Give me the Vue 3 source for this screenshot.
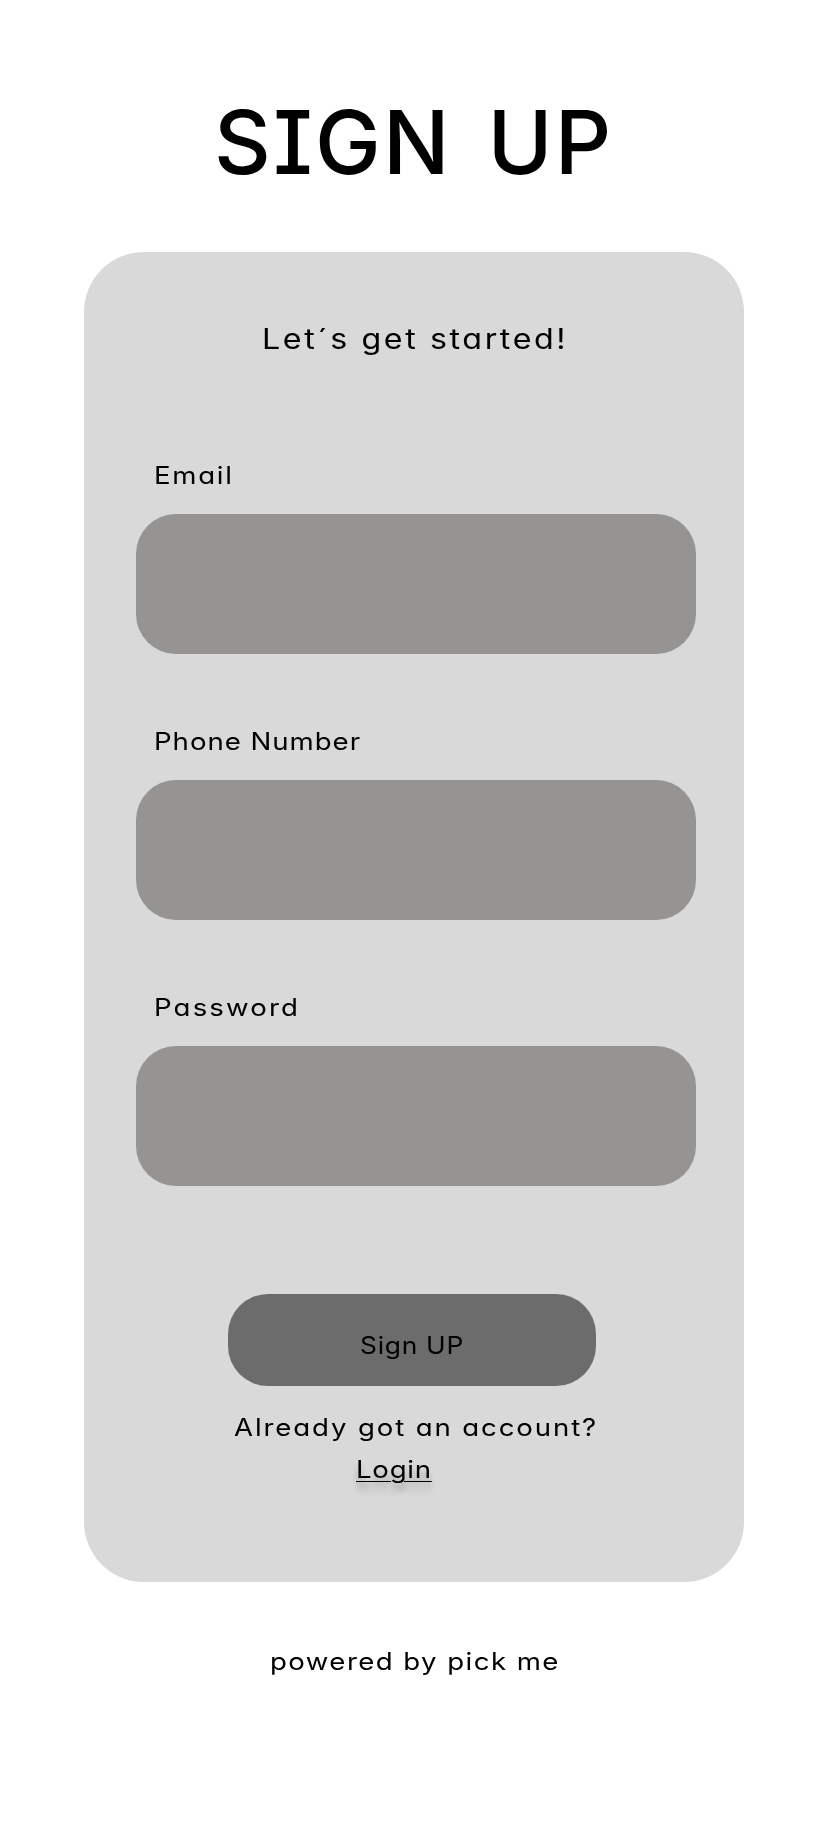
<script setup>
import { reactive } from 'vue'

const fields = [
  { id: 'email', label: 'Email', type: 'email' },
  { id: 'phone', label: 'Phone Number', type: 'tel' },
  { id: 'password', label: 'Password', type: 'password' },
]
const values = reactive({ email: '', phone: '', password: '' })
</script>

<template>
  <main class="page">
    <h1 class="title">SIGN UP</h1>
    <form class="card" @submit.prevent>
      <p class="intro wide">Let´s get started!</p>
      <div v-for="f in fields" :key="f.id" class="field">
        <label :for="f.id" class="label wide" :class="f.id">{{ f.label }}</label>
        <input :id="f.id" v-model="values[f.id]" :type="f.type" class="input" />
      </div>
      <button class="submit" type="submit"><span class="caption">Sign UP</span></button>
      <p class="already wide">Already got an account?</p>
      <a class="login wide">Login</a>
    </form>
    <p class="footer wide">powered by pick me</p>
  </main>
</template>

<style>
body {
  background: #fff;
}
</style>

<style scoped>
.page {
  box-sizing: border-box;
  width: 824px;
  height: 1834px;
  padding: 92px 80px 0 84px;
  color: #000;
  font-family: Inter, "Noto Sans", sans-serif;
  font-size: 24px;
  line-height: 30px;
  font-feature-settings: "cv11", "cv08";
  white-space: nowrap;
}
.wide {
  transform: scaleX(1.15);
  transform-origin: left center;
}
.title {
  margin: 0 0 60px 130px;
  font-size: 88px;
  line-height: 100px;
  font-weight: 500;
  letter-spacing: 2.2px;
  word-spacing: 10px;
}
.card {
  box-sizing: border-box;
  display: flex;
  flex-direction: column;
  align-items: flex-start;
  width: 660px;
  height: 1330px;
  padding: 66px 48px 0 52px;
  border-radius: 60px;
  background: #d9d9d9;
}
.intro {
  margin: 0 0 102px 126px;
  padding-top: 1px;
  font-size: 28px;
  line-height: 40px;
  letter-spacing: 2.25px;
}
.field {
  display: flex;
  flex-direction: column;
  align-items: flex-start;
  gap: 23px;
  margin-bottom: 73px;
}
.label {
  margin-left: 18px;
}
.email {
  letter-spacing: 1.5px;
}
.phone {
  letter-spacing: 0.85px;
}
.password {
  letter-spacing: 1.85px;
}
.input {
  box-sizing: border-box;
  width: 560px;
  height: 140px;
  padding: 0 40px;
  border: 0;
  border-radius: 40px;
  outline: none;
  background: #959492;
  font: inherit;
}
.submit {
  box-sizing: border-box;
  display: flex;
  justify-content: flex-start;
  align-items: flex-start;
  width: 368px;
  height: 92px;
  margin: 35px 0 27px 92px;
  padding: 37px 0 0 132px;
  border: 0;
  border-radius: 40px;
  background: #6c6c6c;
  color: #000;
  font: inherit;
  font-feature-settings: inherit;
  letter-spacing: 0.65px;
}
.caption {
  transform: scaleX(1.1);
  transform-origin: left center;
}
.already {
  margin: 0 0 12px 98px;
  letter-spacing: 1.63px;
}
.login {
  margin-left: 220px;
  letter-spacing: 0.65px;
  text-decoration: underline;
  text-decoration-thickness: 1px;
  text-underline-offset: 3px;
  text-shadow: 0 8px 6px rgba(0, 0, 0, 0.25);
}
.footer {
  width: max-content;
  margin: 65px 0 0 186px;
  letter-spacing: 1.25px;
}
</style>
